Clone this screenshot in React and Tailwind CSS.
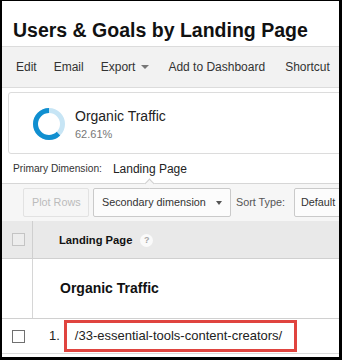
export default function App() {
  const C = 2 * Math.PI * 13.5;
  const dark = 0.6261 * C;
  return (
    <div
      className="w-[342px] h-[360px] box-border overflow-hidden bg-white border-black border-t border-l-2 border-r-[3px] border-b-[3px] flex flex-col"
      style={{ fontFamily: '"Liberation Sans", Arial, sans-serif' }}
    >
      {/* Title */}
      <div className="h-[45px] shrink-0 pt-[19px] pl-[11px]">
        <div className="text-[19.5px] leading-[20px] font-bold text-[#111] whitespace-nowrap">
          Users &amp; Goals by Landing Page
        </div>
      </div>

      {/* Toolbar */}
      <div className="h-[42px] shrink-0 box-border border-y border-[#dcdcdc] bg-[#f2f2f2] flex items-center pl-[14px] text-[12px] text-[#333] whitespace-nowrap">
        <span>Edit</span>
        <span className="ml-[17px]">Email</span>
        <span className="ml-[17px] flex items-center">
          Export
          <span className="ml-[6px] w-0 h-0 border-l-[4px] border-r-[4px] border-t-[4px] border-l-transparent border-r-transparent border-t-[#777]" />
        </span>
        <span className="ml-[19px]">Add to Dashboard</span>
        <span className="ml-[20px]">Shortcut</span>
      </div>

      {/* Card */}
      <div className="mt-[4px] ml-[6px] -mr-[20px] h-[62px] shrink-0 box-border border border-[#dcdcdc] rounded-[3px] flex items-start pl-[24px]">
        <svg width="32" height="32" viewBox="0 0 32 32" className="mt-[15px] shrink-0">
          <circle cx="16" cy="16" r="13.5" fill="none" stroke="#c7e5f5" strokeWidth="5" />
          <circle
            cx="16"
            cy="16"
            r="13.5"
            fill="none"
            stroke="#108fd0"
            strokeWidth="5"
            strokeDasharray={`${dark} ${C}`}
            strokeDashoffset={-(C - dark)}
            transform="rotate(-90 16 16)"
          />
        </svg>
        <div className="ml-[10px] mt-[15px] flex flex-col whitespace-nowrap">
          <span className="text-[14px] leading-[16px] text-[#222]">Organic Traffic</span>
          <span className="mt-[2.5px] text-[11px] leading-[14px] text-[#777]">62.61%</span>
        </div>
      </div>

      {/* Primary dimension */}
      <div className="mt-[9px] h-[12px] shrink-0 pl-[11px] flex items-center whitespace-nowrap text-[#333]">
        <span className="text-[10.2px] leading-[12px]">Primary Dimension:</span>
        <span className="ml-[11px] text-[12px] leading-[12px] text-[#222]">Landing Page</span>
      </div>

      {/* Controls */}
      <div className="relative mt-[8px] h-[38px] shrink-0 box-border border-t border-[#d6d6d6] bg-[#f6f6f6] pt-[4px] pl-[21px] flex items-start whitespace-nowrap text-[10.8px]">
        <span className="absolute top-[-4.5px] left-[144px] w-[7px] h-[7px] rotate-45 bg-[#f6f6f6] border-t border-l border-[#d0d0d0]" />
        <div className="shrink-0 h-[29px] w-[66px] box-border border border-[#e2e2e2] rounded-[2px] flex items-center pl-[8px] text-[#bbbbbb]">
          Plot Rows
        </div>
        <div className="shrink-0 ml-[4px] h-[29px] w-[138px] box-border border border-[#cacaca] rounded-[2px] bg-[#fcfcfc] flex items-center pl-[8px] text-[#333]">
          <span>Secondary dimension</span>
          <span className="ml-auto mr-[8px] w-0 h-0 border-l-[3.5px] border-r-[3.5px] border-t-[4px] border-l-transparent border-r-transparent border-t-[#555]" />
        </div>
        <div className="shrink-0 ml-[5px] h-[29px] flex items-center text-[#555]">Sort Type:</div>
        <div className="shrink-0 ml-[9px] h-[29px] w-[80px] box-border border border-[#cacaca] rounded-[2px] bg-[#fcfcfc] flex items-center pl-[6px] text-[#333]">
          Default
        </div>
      </div>

      {/* Header row */}
      <div className="h-[38px] shrink-0 box-border border-b border-[#d0d0d0] bg-[#e9e9e9] flex">
        <div className="w-[31px] shrink-0 box-border border-r border-[#cfcfcf] flex items-center pl-[10px]">
          <div className="w-[13px] h-[13px] box-border border border-[#c4c4c4] bg-[#ededed]" />
        </div>
        <div className="flex items-center pl-[26px] pt-[2px] whitespace-nowrap">
          <span className="text-[11.2px] font-bold text-[#111]">Landing Page</span>
          <span className="ml-[8px] w-[13px] h-[13px] rounded-full bg-[#fafafa] text-[#a8a8a8] text-[9px] leading-[13px] font-bold text-center">
            ?
          </span>
        </div>
      </div>

      {/* Organic Traffic row */}
      <div className="h-[60px] shrink-0 box-border border-b border-[#d0d0d0] bg-white flex">
        <div className="w-[31px] shrink-0 box-border border-r border-[#d6d6d6]" />
        <div className="flex items-center pl-[27px] whitespace-nowrap">
          <span className="text-[14px] font-bold text-[#111]">Organic Traffic</span>
        </div>
      </div>

      {/* Data row */}
      <div className="h-[35px] shrink-0 box-border border-b border-[#dcdcdc] bg-white flex items-center whitespace-nowrap">
        <div className="shrink-0 ml-[10px] w-[13px] h-[13px] box-border border border-[#707070] bg-white" />
        <span className="ml-[24px] text-[13px] text-[#222]">1.</span>
        <div className="shrink-0 ml-[4px] h-[32px] w-[233px] box-border border-[3px] border-[#e0443f] flex items-center pl-[8px] text-[13px] text-[#222]">
          /33-essential-tools-content-creators/
        </div>
      </div>
    </div>
  );
}
